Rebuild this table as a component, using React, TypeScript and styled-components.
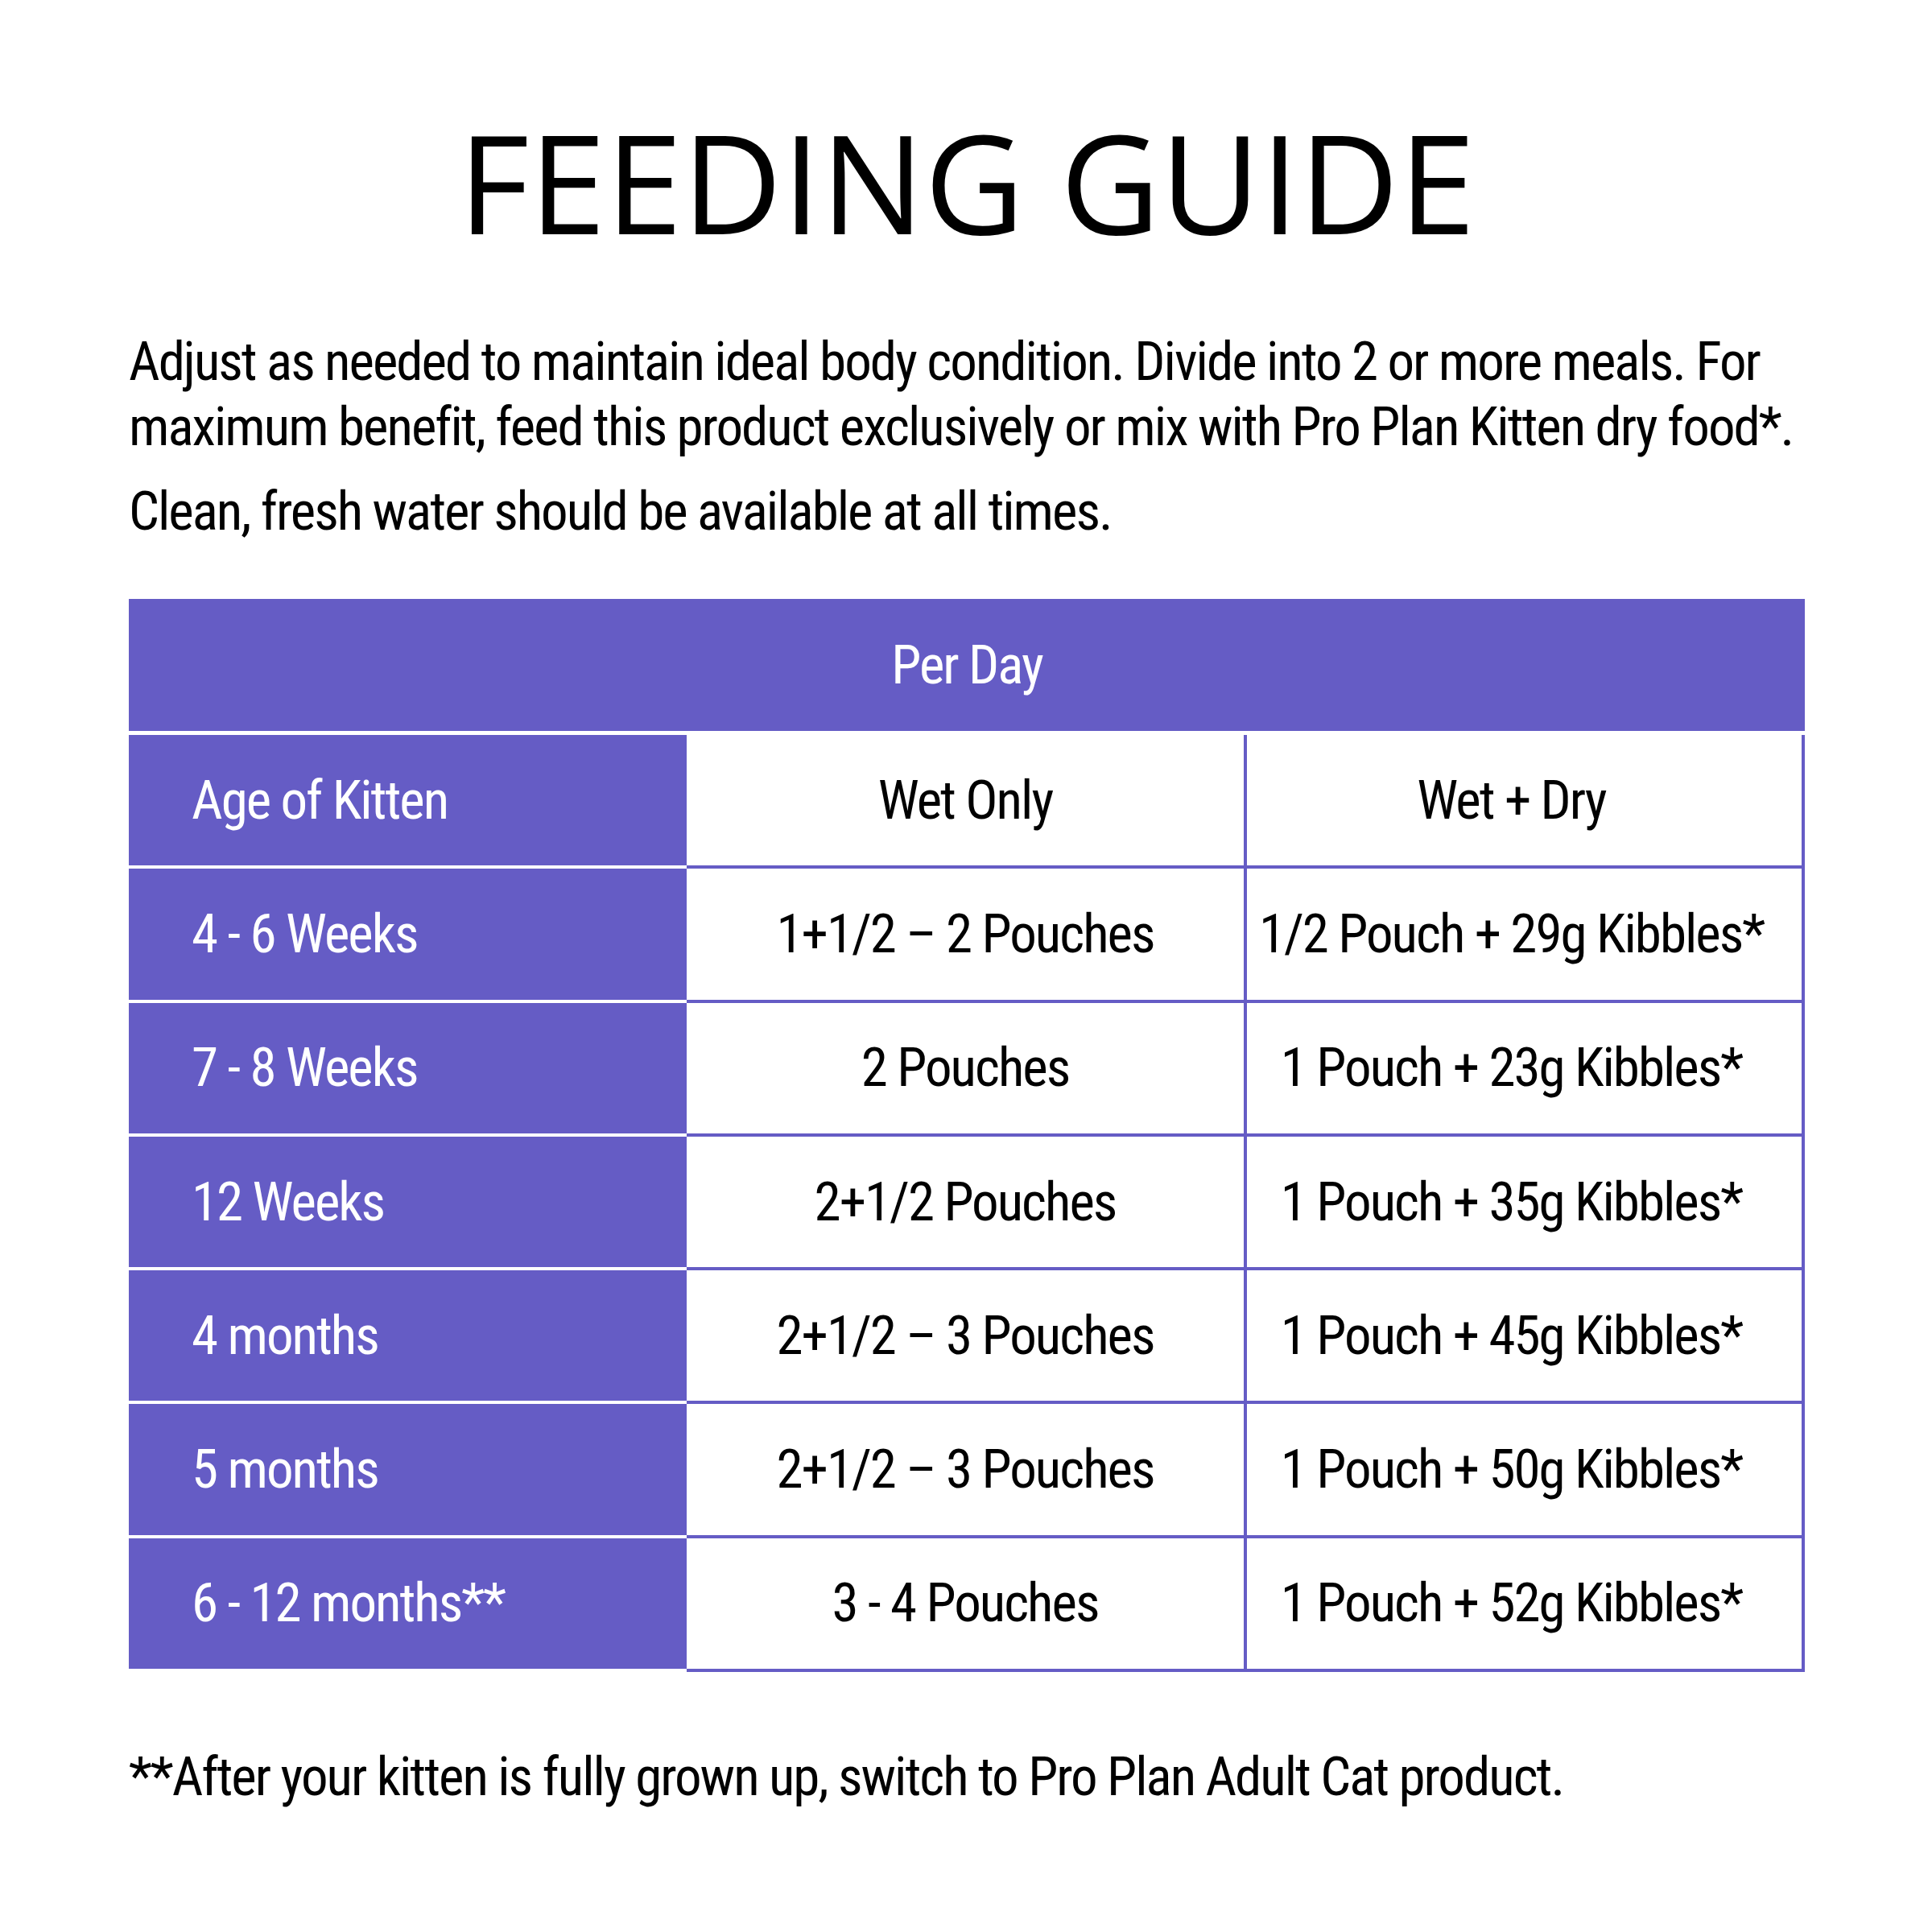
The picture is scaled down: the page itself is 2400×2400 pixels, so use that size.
import React from "react";
import styled, { createGlobalStyle } from "styled-components";

const PURPLE = "#655cc5";

const GlobalStyle = createGlobalStyle`
  body {
    margin: 0;
    background: #fff;
  }
`;

const Page = styled.div`
  width: 2400px;
  height: 2400px;
  box-sizing: border-box;
  padding: 139px 158px 0 160px;
  display: flex;
  flex-direction: column;
  background: #fff;
`;

const Title = styled.h1`
  margin: 0;
  font-family: "Open Sans", sans-serif;
  font-weight: 400;
  font-size: 171px;
  line-height: 171px;
  text-align: center;
  color: #000;
`;

const Intro = styled.div`
  margin-top: 99px;
  display: flex;
  flex-direction: column;
  gap: 24px;
`;

const Text = styled.p`
  margin: 0;
  font-family: "Roboto Condensed", Roboto, sans-serif;
  font-stretch: condensed;
  font-weight: 380;
  font-size: 67px;
  line-height: 81px;
  letter-spacing: -2px;
  white-space: nowrap;
  color: #000;
`;

const Table = styled.div`
  margin-top: 68px;
  display: flex;
  flex-direction: column;
  gap: 5px;
`;

const HeaderBar = styled.div`
  height: 164px;
  background: ${PURPLE};
  display: flex;
  align-items: center;
  justify-content: center;
  font-family: "Roboto Condensed", Roboto, sans-serif;
  font-stretch: condensed;
  font-weight: 380;
  font-size: 67px;
  line-height: 81px;
  letter-spacing: -2px;
  color: #fff;
`;

const Grid = styled.div`
  display: grid;
  grid-template-columns: 693px 696px 693px;
  grid-auto-rows: 166.3px;
`;

const Cell = styled.div<{ $label?: boolean; $shift?: number }>`
  box-sizing: border-box;
  display: flex;
  align-items: center;
  justify-content: ${(p) => (p.$label ? "flex-start" : "center")};
  padding-left: ${(p) => (p.$label ? "78px" : "0")};
  padding-right: ${(p) => p.$shift ?? 0}px;
  background: ${(p) => (p.$label ? PURPLE : "#fff")};
  color: ${(p) => (p.$label ? "#fff" : "#000")};
  border-bottom: 4px solid ${(p) => (p.$label ? "#fff" : PURPLE)};
  border-right: ${(p) => (p.$label ? "none" : `4px solid ${PURPLE}`)};
  font-family: "Roboto Condensed", Roboto, sans-serif;
  font-stretch: condensed;
  font-weight: 380;
  font-size: 67px;
  line-height: 81px;
  letter-spacing: -2px;
  white-space: nowrap;
`;

const Footnote = styled(Text)`
  margin-top: 90px;
`;

const rows: [string, string, string][] = [
  ["Age of Kitten", "Wet Only", "Wet + Dry"],
  ["4 - 6 Weeks", "1+1/2 – 2 Pouches", "1/2 Pouch + 29g Kibbles*"],
  ["7 - 8 Weeks", "2 Pouches", "1 Pouch + 23g Kibbles*"],
  ["12 Weeks", "2+1/2 Pouches", "1 Pouch + 35g Kibbles*"],
  ["4 months", "2+1/2 – 3 Pouches", "1 Pouch + 45g Kibbles*"],
  ["5 months", "2+1/2 – 3 Pouches", "1 Pouch + 50g Kibbles*"],
  ["6 - 12 months**", "3 - 4 Pouches", "1 Pouch + 52g Kibbles*"],
];

const App: React.FC = () => {
  return (
    <>
      <GlobalStyle />
      <Page>
        <Title>FEEDING GUIDE</Title>
        <Intro>
          <Text>
            Adjust as needed to maintain ideal body condition. Divide into 2 or more meals. For
            <br />
            maximum benefit, feed this product exclusively or mix with Pro Plan Kitten dry food*.
          </Text>
          <Text>Clean, fresh water should be available at all times.</Text>
        </Intro>
        <Table>
          <HeaderBar>Per Day</HeaderBar>
          <Grid>
            {rows.map(([age, wet, mixed]) => (
              <React.Fragment key={age}>
                <Cell $label>{age}</Cell>
                <Cell>{wet}</Cell>
                <Cell $shift={32}>{mixed}</Cell>
              </React.Fragment>
            ))}
          </Grid>
        </Table>
        <Footnote>**After your kitten is fully grown up, switch to Pro Plan Adult Cat product.</Footnote>
      </Page>
    </>
  );
};

export default App;
